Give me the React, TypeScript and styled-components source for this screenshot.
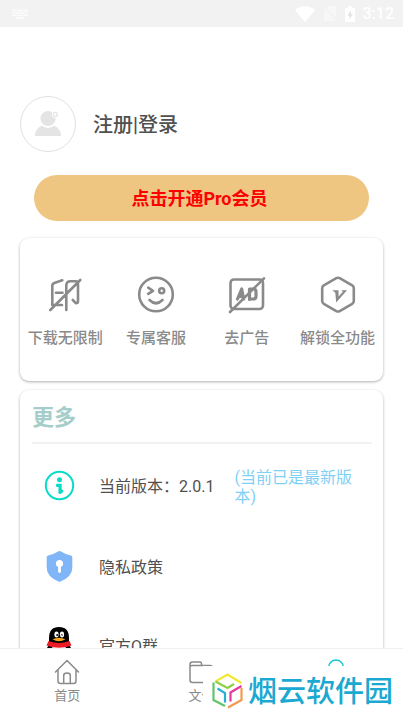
import React from "react";
import styled, { createGlobalStyle } from "styled-components";

const GlobalStyle = createGlobalStyle`
  * { box-sizing: border-box; }
  body {
    margin: 0;
    background: #fff;
    font-family: Roboto, "Noto Sans CJK SC", sans-serif;
    color: #505050;
  }
  button { font: inherit; color: inherit; border: 0; padding: 0; background: none; cursor: pointer; }
  svg { display: block; flex: none; }
`;

const Screen = styled.div`
  height: 100vh;
  display: flex;
  flex-direction: column;
  overflow: hidden;
`;

const StatusBar = styled.header`
  flex: none;
  height: 27px;
  padding: 0 9px 0 12px;
  display: flex;
  align-items: center;
  justify-content: space-between;
  background: #f2f2f2;
  color: #fff;
`;

const StatusIcons = styled.div`
  display: flex;
  align-items: center;
  gap: 8px;
`;

const Clock = styled.time`
  font-size: 16px;
  line-height: 20px;
  font-weight: 500;
`;

const Content = styled.main`
  flex: 1;
  min-height: 0;
  overflow-y: auto;
  scrollbar-width: none;
  padding: 69px 20px 0;
`;

const Profile = styled.button`
  display: flex;
  align-items: center;
  gap: 17px;
  font-size: 20px;
  font-weight: 500;
  line-height: 28px;
`;

const ProfileName = styled.span`
  padding-top: 2px;
`;

const Avatar = styled.span`
  width: 56px;
  height: 56px;
  border: 1px solid #e0e0e0;
  border-radius: 50%;
  display: grid;
  place-items: center;
`;

const ProButton = styled.button`
  && {
    display: block;
    width: calc(100% - 28px);
    height: 46px;
    margin: 23px 14px 17px;
    padding: 2px 4px 0 0;
    border-radius: 23px;
    background: #eec581;
    color: #f00;
    font-size: 18px;
    font-weight: 700;
    line-height: 26px;
  }
`;

const Card = styled.section`
  border-radius: 9px;
  background: #fff;
  box-shadow: 0 1px 3px rgba(0, 0, 0, 0.32);
`;

const FeatureCard = styled(Card)`
  display: grid;
  grid-template-columns: repeat(4, 1fr);
  padding: 38px 0 32px;
  margin-bottom: 9px;
`;

const Feature = styled.button`
  && {
    display: flex;
    flex-direction: column;
    align-items: center;
    gap: 13px;
    color: #8a8a8a;
    font-size: 15px;
    font-weight: 500;
    line-height: 22px;
    white-space: nowrap;
  }
`;

const MoreCard = styled(Card)`
  padding: 0 11px 0 12px;
`;

const MoreTitle = styled.h2`
  margin: 0;
  padding: 12px 0 8px;
  border-bottom: 2px solid #f2f2f2;
  color: #a5cdca;
  font-size: 22px;
  font-weight: 700;
  line-height: 32px;
`;

const Row = styled.button`
  && {
    width: 100%;
    height: 81px;
    padding: 1px 12px 0;
    display: flex;
    align-items: center;
    text-align: left;
    font-size: 16px;
    line-height: 19px;
  }
  &&:last-child {
    height: 76px;
  }
`;

const RowLabel = styled.span`
  padding-top: 3px;
  margin-left: 24px;
`;

const RowNote = styled.span`
  flex: 1;
  padding-top: 3px;
  margin-left: 20px;
  color: #7fd0f5;
`;

const NavBar = styled.nav`
  position: relative;
  flex: none;
  height: 68px;
  display: grid;
  grid-template-columns: repeat(3, 1fr);
  border-top: 1px solid #f0f0f0;
  background: #fff;
`;

const NavItem = styled.button<{ $active?: boolean }>`
  && {
    display: flex;
    flex-direction: column;
    align-items: center;
    padding-top: 10px;
    gap: 2px;
    color: ${(p) => (p.$active ? "#17c8d8" : "#8a8a8a")};
    font-size: 13px;
    line-height: 18px;
  }
`;

const SiteMark = styled.div`
  position: absolute;
  right: 0;
  bottom: 0;
  width: 200px;
  height: 50px;
  padding: 0 10px 0 9px;
  display: flex;
  align-items: center;
  justify-content: space-between;
  background: #fff;
  color: #1ba8d1;
  font-size: 29px;
  font-weight: 500;
  line-height: 50px;
  white-space: nowrap;
`;

const SiteName = styled.span`
  padding-top: 2px;
`;

const KeyboardIcon = () => (
  <svg width="16" height="10" viewBox="0 0 16 10" fill="none" stroke="#fff">
    <path d="M0 1.5h16M1 4h14M0 6.5h16" strokeWidth="1.6" strokeDasharray="1.7 .7" />
    <path d="M4 9h8" strokeWidth="1.2" />
  </svg>
);

const WifiIcon = () => (
  <svg width="20" height="16" viewBox="0 0 20 16" fill="#fff">
    <path d="M0 4Q10-3.5 20 4L10 16z" />
  </svg>
);

const NoSimIcon = () => (
  <svg width="14" height="15" viewBox="0 0 14 15" fill="#f7f7f7">
    <path d="M4.5 0H13v11.5L3.4 1.7zM1.5 2.8 13 14.5l-.6.5H2q-1 0-1-1V3.2z" />
  </svg>
);

const BatteryIcon = () => (
  <svg width="10" height="16" viewBox="0 0 10 16">
    <path fill="#fff" d="M3 0h4v2h3v14H0V2h3z" />
    <path fill="#e4e4e4" d="M6 4 2.500 9.700h2V13.500L8 8H6z" />
  </svg>
);

const PersonIcon = () => (
  <svg width="28" height="28" viewBox="0 0 28 28" fill="#e4e4e4">
    <circle cx="14" cy="8.500" r="7.600" />
    <path d="M.8 26q.7-7.800 7-10.200Q14 20 20.200 15.800q6.300 2.400 7 10.200z" />
    <circle cx="21.300" cy="4.500" r="3.500" fill="#fff" />
    <circle cx="21.300" cy="4.500" r="2.100" fill="none" stroke="#e4e4e4" strokeWidth="1.300" />
  </svg>
);

const featureSvg = {
  width: 38,
  height: 38,
  viewBox: "0 0 38 38",
  fill: "none",
  stroke: "currentColor",
  strokeWidth: 2.6,
  strokeLinecap: "round" as const,
  strokeLinejoin: "round" as const,
};

const NoWatermarkIcon = () => (
  <svg {...featureSvg}>
    <path d="M16.300 4.300 8.300 7Q6.300 7.700 6.300 10v19H16M10 16.700h6.500M20.300 34V9.500q0-4.300 4-4.300h5.200q2.500 0 2.500 2.500V25q0 2.300-2 2.300L26.800 24M4.300 34 34.300 4" />
  </svg>
);

const WinkIcon = () => (
  <svg {...featureSvg}>
    <circle cx="19" cy="18.500" r="16.800" />
    <path d="m11.200 11.700 4.800 3.100-4.800 3.100M12.500 24q6.500 6.500 13 0" />
    <circle cx="24.700" cy="14.700" r="2.500" />
  </svg>
);

const NoAdIcon = () => (
  <svg {...featureSvg}>
    <rect x="2.500" y="3.500" width="32.500" height="29.500" rx="3.500" />
    <path strokeWidth="3.200" d="m9.500 23 4.200-10 1.800 10M11.500 20.300h4M21.500 13v10.500M22 13h3.500q2.500 0 2.500 2.800v4.400q0 2.800-2.800 2.800H22" />
    <path d="M2 36 36 2.300" />
  </svg>
);

const VipIcon = () => (
  <svg {...featureSvg}>
    <path d="M17.300 2.200q1.700-.9 3.400 0L33.200 9.300q1.600.9 1.600 2.800v13q0 1.900-1.600 2.800l-12.500 7.200q-1.700.9-3.400 0L4.800 27.900q-1.600-.9-1.600-2.800v-13q0-1.900 1.600-2.800z" />
    <path fill="currentColor" stroke="none" d="M13.300 14.300h6.200l.1 6.200 4.300-4.700-1.600-1.500H28L17.200 26.500l-.9-9.800z" />
  </svg>
);

const InfoIcon = () => (
  <svg width="31" height="31" viewBox="0 0 31 31" fill="none" stroke="#08dcc8">
    <circle cx="15.500" cy="15.500" r="13.700" strokeWidth="2" />
    <circle cx="15.500" cy="9.700" r="2.500" fill="#08dcc8" stroke="none" />
    <path d="M13.300 15.300h2.800v7M15.800 22.300l1.900-1.200" strokeWidth="3.200" strokeLinecap="round" />
  </svg>
);

const ShieldIcon = () => (
  <svg width="31" height="31" viewBox="0 0 31 31">
    <path fill="#80b5f8" d="M15.500 0q1 0 2 .8 4.500 3 9.300 3.700 1.500.3 1.500 1.700v10.500Q28.300 26 15.500 31 2.700 26 2.700 16.700V6.200q0-1.400 1.500-1.700Q9 3.800 13.500.8q1-.8 2-.8z" />
    <circle cx="15.500" cy="12.500" r="3.600" fill="#fff" />
    <path d="M15.500 13v7.500" stroke="#fff" strokeWidth="2.800" strokeLinecap="round" />
  </svg>
);

const PenguinIcon = () => (
  <svg width="31" height="36" viewBox="0 0 31 36">
    <path d="M5 18V11Q5 0 15 0t10 11v7q4 5 4 10l-3-2q-1 8-11 8T4 26l-3 2q0-5 4-10z" />
    <ellipse cx="15" cy="25" rx="8" ry="8.500" fill="#fff" />
    <path fill="#eb1c26" d="M4.500 14q10.500 4 21 0l2 4.500Q15 23 2.500 18.500z" />
    <ellipse cx="12.500" cy="7.500" rx="2.100" ry="3" fill="#fff" />
    <ellipse cx="18" cy="7.500" rx="2.100" ry="3" fill="#fff" />
    <circle cx="13.200" cy="8" r="1" />
    <path d="M16.800 8.300q1-1.500 2 0" fill="none" stroke="#000" />
    <path fill="#f9a51b" d="M8.500 12.200q6.500-3 13 0Q15 16.500 8.500 12.200z" />
    <path fill="#f9a51b" d="M3 34q5-4 11 0-5 3-11 0zm13 0q6-4 11 0-6 3-11 0z" />
  </svg>
);

const navSvg = {
  width: 26,
  height: 26,
  viewBox: "0 0 26 26",
  fill: "none",
  stroke: "currentColor",
  strokeWidth: 1.5,
  strokeLinecap: "round" as const,
  strokeLinejoin: "round" as const,
};

const HomeIcon = () => (
  <svg {...navSvg}>
    <path d="M1.500 13 13 1.500 24.500 13M4 11v11q0 2.500 2.500 2.500h13Q22 24.500 22 22V11M9.700 24.500V16.500q0-2.500 3.300-2.500t3.300 2.500v8" />
  </svg>
);

const FolderIcon = () => (
  <svg {...navSvg}>
    <path d="M2 22V5.500Q2 3 4.500 3H12q1.500 0 1.500 1.500v2M2 8q0-1.500 2-1.500h18q2.500 0 2.500 2.500v12q0 2.500-2.500 2.500H4.500Q2 23.500 2 21" />
  </svg>
);

const UserIcon = () => (
  <svg {...navSvg}>
    <circle cx="13" cy="8.500" r="7.500" />
    <path d="M2 25q1.500-8.500 11-8.500T24 25" />
  </svg>
);

const CubeLogo = () => (
  <svg width="31" height="36" viewBox="0 0 31 36" fill="none" strokeWidth="2.200">
    <path stroke="#f2e92c" d="M3.500 8.500 15.500 1.500l14 8.500" />
    <path stroke="#8fcf46" d="m3.500 8.500 12 6.500 6.500-4" />
    <path stroke="#62c46b" d="M1.500 9.500v17.500L13 33" />
    <path stroke="#24b0cf" d="m5.500 15.500 7.500 4.500v9.500" />
    <path stroke="#f39a51" d="M29.500 15v12L16 34.500" />
    <path stroke="#e23a9b" d="M18.500 28.500v-9L29.500 13" />
  </svg>
);

const features = [
  { label: "下载无限制", Icon: NoWatermarkIcon },
  { label: "专属客服", Icon: WinkIcon },
  { label: "去广告", Icon: NoAdIcon },
  { label: "解锁全功能", Icon: VipIcon },
];

const rows = [
  { label: "当前版本：2.0.1", note: "(当前已是最新版本)", Icon: InfoIcon },
  { label: "隐私政策", Icon: ShieldIcon },
  { label: "官方Q群", Icon: PenguinIcon },
];

export default function App() {
  return (
    <Screen>
      <GlobalStyle />
      <StatusBar>
        <KeyboardIcon />
        <StatusIcons>
          <WifiIcon />
          <NoSimIcon />
          <BatteryIcon />
          <Clock>3:12</Clock>
        </StatusIcons>
      </StatusBar>
      <Content>
        <Profile>
          <Avatar>
            <PersonIcon />
          </Avatar>
          <ProfileName>注册|登录</ProfileName>
        </Profile>
        <ProButton>点击开通Pro会员</ProButton>
        <FeatureCard>
          {features.map(({ label, Icon }) => (
            <Feature key={label}>
              <Icon />
              {label}
            </Feature>
          ))}
        </FeatureCard>
        <MoreCard>
          <MoreTitle>更多</MoreTitle>
          {rows.map(({ label, note, Icon }) => (
            <Row key={label}>
              <Icon />
              <RowLabel>{label}</RowLabel>
              {note && <RowNote>{note}</RowNote>}
            </Row>
          ))}
        </MoreCard>
      </Content>
      <NavBar>
        <NavItem>
          <HomeIcon />
          首页
        </NavItem>
        <NavItem>
          <FolderIcon />
          文件
        </NavItem>
        <NavItem $active aria-label="我的">
          <UserIcon />
        </NavItem>
        <SiteMark>
          <CubeLogo />
          <SiteName>烟云软件园</SiteName>
        </SiteMark>
      </NavBar>
    </Screen>
  );
}
